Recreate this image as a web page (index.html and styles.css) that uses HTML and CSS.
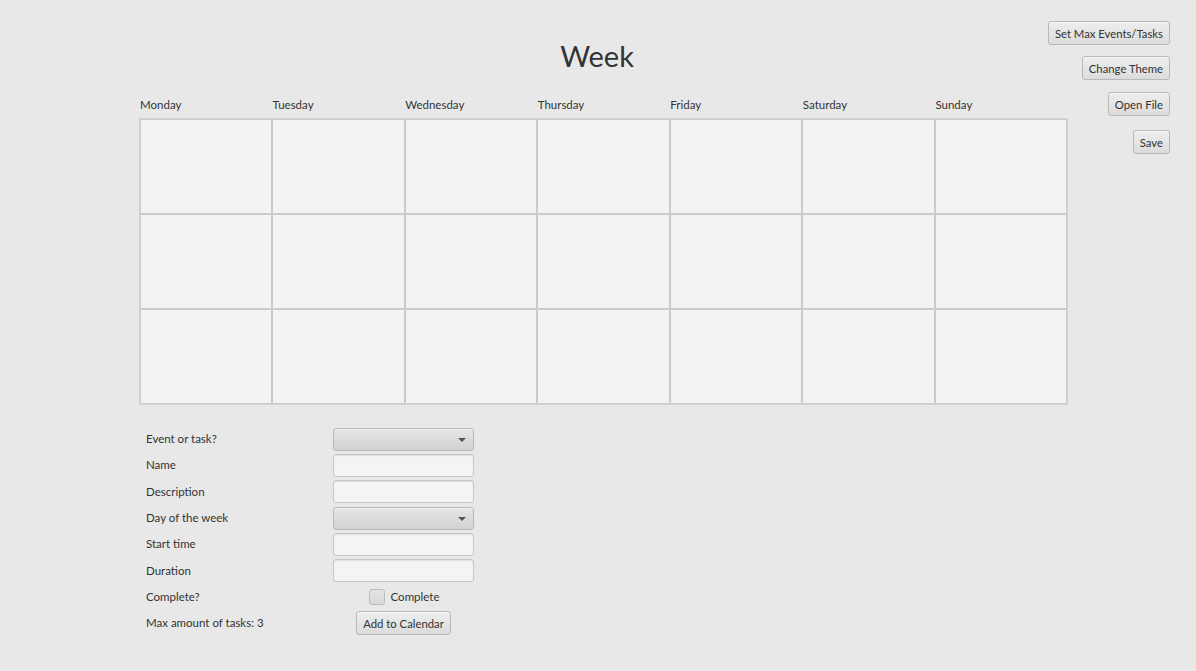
FILE: index.html
```html
<!DOCTYPE html>
<html lang="en">
<head>
<meta charset="utf-8">
<title>Week</title>
<link rel="stylesheet" href="styles.css">
</head>
<body>
<div class="app">
  <h1 class="title">Week</h1>

  <div class="sidebar">
    <button class="btn btn-max">Set Max Events/Tasks</button>
    <button class="btn btn-theme">Change Theme</button>
    <button class="btn btn-open">Open File</button>
    <button class="btn btn-save">Save</button>
  </div>

  <div class="week">
    <div class="days">
      <span>Monday</span><span>Tuesday</span><span>Wednesday</span><span>Thursday</span><span>Friday</span><span>Saturday</span><span>Sunday</span>
    </div>
    <div class="grid">
      <div class="cell"></div><div class="cell"></div><div class="cell"></div><div class="cell"></div><div class="cell"></div><div class="cell"></div><div class="cell"></div>
      <div class="cell"></div><div class="cell"></div><div class="cell"></div><div class="cell"></div><div class="cell"></div><div class="cell"></div><div class="cell"></div>
      <div class="cell"></div><div class="cell"></div><div class="cell"></div><div class="cell"></div><div class="cell"></div><div class="cell"></div><div class="cell"></div>
    </div>

    <form class="form">
      <label class="lbl">Event or task?</label>
      <div class="ctl"><div class="combo"><span class="arrow"></span></div></div>

      <label class="lbl">Name</label>
      <div class="ctl"><input class="field" type="text"></div>

      <label class="lbl">Description</label>
      <div class="ctl"><input class="field" type="text"></div>

      <label class="lbl">Day of the week</label>
      <div class="ctl"><div class="combo"><span class="arrow"></span></div></div>

      <label class="lbl">Start time</label>
      <div class="ctl"><input class="field" type="text"></div>

      <label class="lbl">Duration</label>
      <div class="ctl"><input class="field" type="text"></div>

      <label class="lbl">Complete?</label>
      <div class="ctl center"><span class="check"><span class="box"></span>Complete</span></div>

      <label class="lbl">Max amount of tasks: 3</label>
      <div class="ctl center"><button type="button" class="btn">Add to Calendar</button></div>
    </form>
  </div>
</div>
</body>
</html>
```

FILE: styles.css
```css
html, body {
  margin: 0;
  padding: 0;
  background: #e8e8e8;
}
body {
  font-family: Lato, "Open Sans", "Liberation Sans", sans-serif;
  font-size: 12px;
  color: #333333;
  width: 1196px;
  height: 671px;
  overflow: hidden;
}
.app {
  display: grid;
  grid-template-columns: 139px 929px minmax(0, 1fr);
  grid-template-rows: 96px auto;
}
.title {
  grid-column: 1 / 4;
  grid-row: 1;
  margin: 0;
  padding-top: 36px;
  text-align: center;
  font-weight: 400;
  font-size: 29px;
  line-height: 40px;
  color: #333333;
  transform: translateX(-1px);
}
.sidebar {
  grid-column: 3;
  grid-row: 1 / 3;
  display: flex;
  flex-direction: column;
  align-items: flex-end;
  padding: 21px 26px 0 0;
  min-width: 0;
}
.btn {
  font-family: inherit;
  font-size: 11.3px;
  color: #333333;
  height: 24px;
  padding: 0 6px;
  border: 1px solid #b8b8b8;
  border-radius: 3px;
  background: linear-gradient(#eeeeee, #dcdcdc);
  box-shadow: inset 0 1px 0 #f6f6f6;
  cursor: default;
  white-space: nowrap;
  flex-shrink: 0;
}
.btn-theme { margin-top: 11px; }
.btn-open { margin-top: 12px; }
.btn-save { margin-top: 14px; }

.week {
  grid-column: 2;
  grid-row: 2;
}
.days {
  display: grid;
  grid-template-columns: repeat(7, 1fr);
  height: 22px;
  align-items: start;
  font-size: 11.5px;
  line-height: 18px;
  padding-left: 1px;
}
.grid {
  display: grid;
  grid-template-columns: repeat(7, 1fr);
  grid-template-rows: repeat(3, 95px);
  width: 929px;
  border: 1px solid #d4d4d4;
  box-sizing: border-box;
  height: 287px;
}
.cell {
  background: #f3f3f3;
  border: 1px solid #cbcbcb;
}

.form {
  margin: 21px 0 0 7px;
  display: grid;
  grid-template-columns: 187px 141px;
  grid-auto-rows: 26.3px;
  align-items: center;
}
.lbl {
  font-size: 11.5px;
  line-height: 14px;
}
.ctl {
  height: 23px;
  display: flex;
  align-items: center;
}
.ctl.center {
  justify-content: center;
  height: 24px;
}
.combo {
  position: relative;
  width: 100%;
  height: 23px;
  box-sizing: border-box;
  border: 1px solid #b8b8b8;
  border-radius: 3px;
  background: linear-gradient(#e6e6e6, #d2d2d2);
  box-shadow: inset 0 1px 0 #eeeeee;
}
.arrow {
  position: absolute;
  right: 7px;
  top: 9px;
  width: 0;
  height: 0;
  border-left: 4px solid transparent;
  border-right: 4px solid transparent;
  border-top: 4px solid #555555;
}
.field {
  width: 100%;
  height: 23px;
  box-sizing: border-box;
  margin: 0;
  border: 1px solid #c6c6c6;
  border-radius: 3px;
  background: #f4f4f4;
  box-shadow: inset 0 1px 1px #e0e0e0;
  outline: none;
}
.check {
  display: flex;
  align-items: center;
  gap: 6px;
  font-size: 11.5px;
  padding-left: 1px;
}
.box {
  width: 16px;
  height: 16px;
  box-sizing: border-box;
  border: 1px solid #bcbcbc;
  border-radius: 3px;
  background: linear-gradient(#e4e4e4, #d8d8d8);
}
```
